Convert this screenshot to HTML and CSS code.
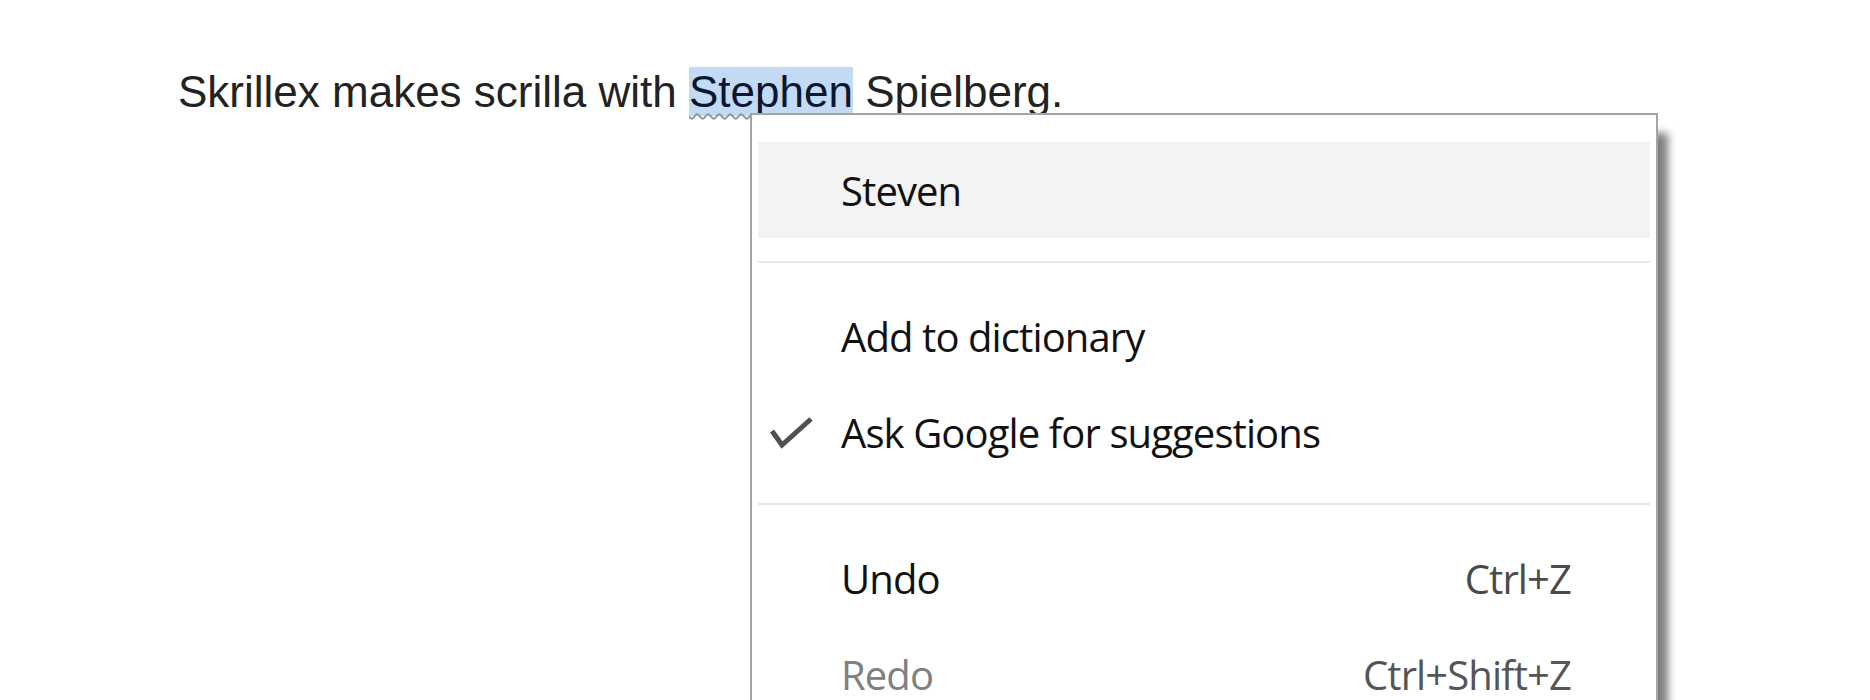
FILE: index.html
```html
<!DOCTYPE html>
<html>
<head>
<meta charset="utf-8">
<link rel="stylesheet" href="styles.css">
</head>
<body>
<p class="doc">Skrillex makes scrilla with <span class="sel">Stephen</span> Spielberg.</p>
<div class="menu">
  <div class="item hover"><span class="check"></span><span class="label">Steven</span></div>
  <div class="sep"></div>
  <div class="item"><span class="check"></span><span class="label">Add to dictionary</span></div>
  <div class="item"><span class="check"><svg width="44" height="34" viewBox="0 0 44 34"><path d="M3 15 L13 29 L42 3" fill="none" stroke="#505050" stroke-width="5" stroke-linejoin="miter"/></svg></span><span class="label">Ask Google for suggestions</span></div>
  <div class="sep"></div>
  <div class="item"><span class="check"></span><span class="label">Undo</span><span class="key">Ctrl+Z</span></div>
  <div class="item disabled"><span class="check"></span><span class="label">Redo</span><span class="key">Ctrl+Shift+Z</span></div>
</div>
</body>
</html>
```
FILE: styles.css
```css
html, body {
  margin: 0;
  padding: 0;
  background: #ffffff;
  overflow: hidden;
  height: 700px;
}
.doc {
  margin: 68px 0 0 178px;
  font-family: "Liberation Sans", Arial, sans-serif;
  font-size: 44px;
  line-height: 48px;
  color: #222222;
}
.sel {
  background: #c3daf4;
  color: #0c1630;
  text-decoration: underline wavy #8c94a4;
  text-decoration-thickness: 2px;
  text-underline-offset: 6px;
}
.menu {
  position: absolute;
  left: 750px;
  top: 113px;
  width: 904px;
  border: 2px solid #a4a4a4;
  background: #ffffff;
  padding-top: 27px;
  box-shadow: 14px 16px 8px -4px rgba(0, 0, 0, 0.5);
  font-family: "Open Sans", "Noto Sans", sans-serif;
  font-size: 40px;
  letter-spacing: -0.9px;
  color: #111111;
}
.item {
  display: flex;
  align-items: center;
  height: 96px;
  margin: 0 6px;
  padding-right: 79px;
}
.item.hover {
  background: #f3f3f3;
}
.check {
  width: 72px;
  padding-left: 11px;
  display: flex;
  align-items: center;
}
.check svg {
  display: block;
  margin-top: 2px;
}
.label {
  flex: 1;
}
.key {
  color: #4a4a4a;
}
.disabled .label {
  color: #808080;
}
.disabled .key {
  color: #555555;
}
.sep {
  height: 50px;
  margin: 0 6px;
  display: flex;
  flex-direction: column;
}
.sep::before {
  content: "";
  display: block;
  margin-top: 23px;
  height: 2px;
  background: #e8e8e8;
}
```
